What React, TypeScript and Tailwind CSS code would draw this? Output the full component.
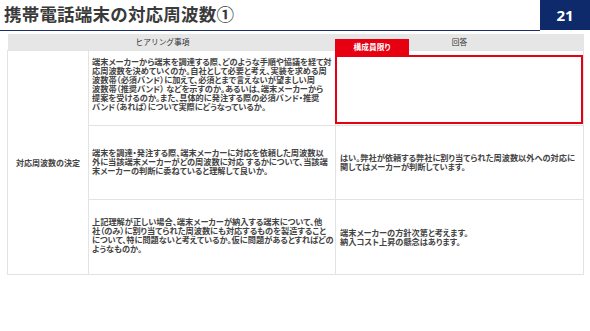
export default function App() {
  const cell = "border border-[#e3e3e3] align-middle";
  return (
    <div
      className="w-[590px] h-[331px] bg-white text-[#3c3c3c] overflow-hidden"
      style={{ fontFamily: '"Noto Sans CJK JP", "Noto Sans", sans-serif' }}
    >
      <div className="flex h-[31px]">
        <div className="flex-1 border-b-[1.5px] border-[#1b2f6b] flex items-center pl-[4px] pb-[2px]">
          <h1 className="text-[17.5px] font-bold leading-none tracking-[0.2px] text-[#3a3a3a]">
            携帯電話端末の対応周波数①
          </h1>
        </div>
        <div className="w-[50px] h-[30px] bg-[#0f2a6b] flex items-center justify-center">
          <span className="text-white text-[15px] font-bold leading-none" style={{ fontFamily: '"Open Sans", sans-serif' }}>
            21
          </span>
        </div>
      </div>

      <table className="ml-[7px] mt-[3px] w-[576px] border-collapse table-fixed">
        <colgroup>
          <col className="w-[81px]" />
          <col className="w-[247px]" />
          <col className="w-[248px]" />
        </colgroup>
        <thead>
          <tr className="h-[16px] bg-[#e6e6e6]">
            <th colSpan={2} className="text-[7.7px] font-normal text-[#333] pr-[18px] leading-none">
              ヒアリング事項
            </th>
            <th className="text-[7.7px] font-normal text-[#333] leading-none">回答</th>
          </tr>
        </thead>
        <tbody className="text-[8.2px] leading-[9px] font-bold text-[#444] [font-feature-settings:'palt']">
          <tr className="h-[75px]">
            <td rowSpan={3} className={`${cell} text-center text-[8px]`}>
              対応周波数の決定
            </td>
            <td className={`${cell} pl-[3px] pb-[7px] whitespace-nowrap`}>
              端末メーカーから端末を調達する際、どのような手順や協議を経て対
              <br />
              応周波数を決めていくのか。自社として必要と考え、実装を求める周
              <br />
              波数帯（必須バンド）に加えて、必須とまで言えないが望ましい周
              <br />
              波数帯（推奨バンド） などを示すのか。あるいは、端末メーカーから
              <br />
              提案を受けるのか。また、具体的に発注する際の必須バンド・推奨
              <br />
              バンド（あれば）について実際にどうなっているか。
            </td>
            <td className={`${cell} p-0 align-top`}>
              <div className="relative mt-[4px] mb-[1px] ml-[-1px] h-[69px] border-2 border-[#e60012]">
                <div className="absolute left-[-2px] top-[-18px] w-[74px] h-[17px] bg-[#e60012] flex items-center justify-center">
                  <span className="text-white text-[7.7px] font-bold leading-none">構成員限り</span>
                </div>
              </div>
            </td>
          </tr>
          <tr className="h-[74px]">
            <td className={`${cell} pl-[3px] pb-[2px] whitespace-nowrap`}>
              端末を調達・発注する際、端末メーカーに対応を依頼した周波数以
              <br />
              外に当該端末メーカーがどの周波数に対応 するかについて、当該端
              <br />
              末メーカーの判断に委ねていると理解して良いか。
            </td>
            <td className={`${cell} pl-[4px] whitespace-nowrap`}>
              はい。弊社が依頼する弊社に割り当てられた周波数以外への対応に
              <br />
              関してはメーカーが判断しています。
            </td>
          </tr>
          <tr className="h-[75px]">
            <td className={`${cell} pl-[3px] pb-[3px] whitespace-nowrap`}>
              上記理解が正しい場合、端末メーカーが納入する端末について、他
              <br />
              社（のみ）に割り当てられた周波数にも対応するものを製造すること
              <br />
              について、特に問題ないと考えているか。仮に問題があるとすればどの
              <br />
              ようなものか。
            </td>
            <td className={`${cell} pl-[4px] whitespace-nowrap`}>
              端末メーカーの方針次第と考えます。
              <br />
              納入コスト上昇の懸念はあります。
            </td>
          </tr>
        </tbody>
      </table>
    </div>
  );
}
